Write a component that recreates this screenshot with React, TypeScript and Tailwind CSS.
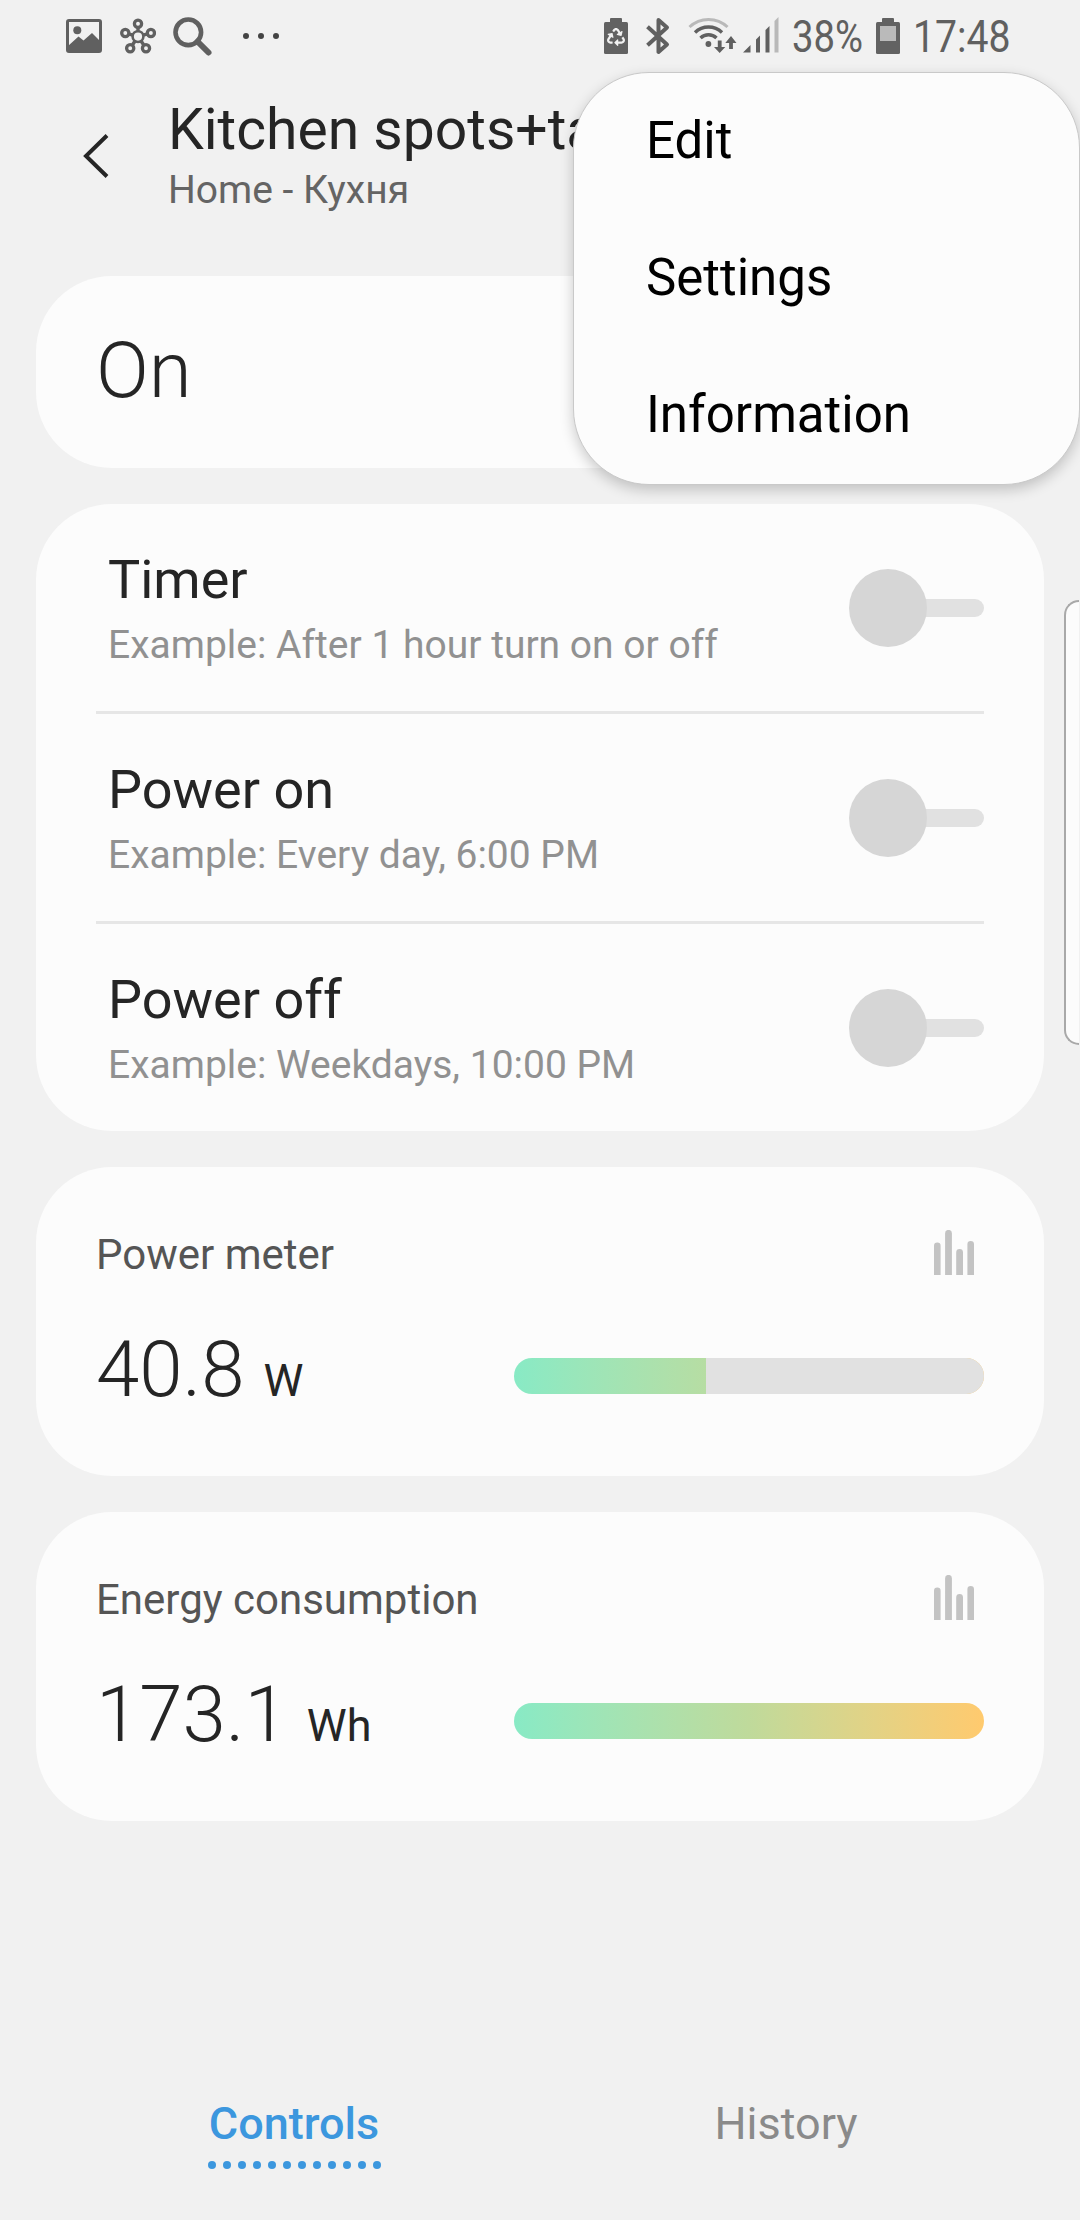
import React from "react";
import { FaRecycle } from "react-icons/fa";

const GREY = "#606060";

function PictureIcon() {
  return (
    <svg width="36" height="34" viewBox="0 0 36 34" className="shrink-0">
      <rect x="1.5" y="1.5" width="33" height="31" rx="1.5" fill="none" stroke={GREY} strokeWidth="3" />
      <circle cx="11.3" cy="11.2" r="4" fill={GREY} />
      <path d="M2 27 L12.500 17.500 L17.500 21.500 L26 14 L34 22 V33 H2 Z" fill={GREY} />
    </svg>
  );
}

function HubIcon() {
  const nodes = [
    [18, 5.8],
    [5.3, 15],
    [30.9, 15],
    [10.2, 30.3],
    [26, 30.3],
  ];
  return (
    <svg width="36" height="36" viewBox="0 0 36 36" className="shrink-0" fill="none" stroke={GREY}>
      {nodes.map(([x, y]) => (
        <g key={x}>
          <line x1={18 + (x - 18) * 0.38} y1={18.6 + (y - 18.6) * 0.38} x2={18 + (x - 18) * 0.7} y2={18.6 + (y - 18.6) * 0.7} strokeWidth="3.400" />
          <circle cx={x} cy={y} r="3.6" strokeWidth="3.300" />
        </g>
      ))}
      <circle cx="18" cy="18.6" r="5.4" strokeWidth="2.600" />
    </svg>
  );
}

function SearchIcon() {
  return (
    <svg width="40" height="40" viewBox="0 0 40 40" className="shrink-0" fill="none" stroke={GREY}>
      <circle cx="15.3" cy="15.3" r="12.800" strokeWidth="4.600" />
      <path d="M24.500 24.500 L35.500 35.500" strokeWidth="6" strokeLinecap="round" />
    </svg>
  );
}

function BluetoothIcon() {
  return (
    <svg width="24" height="38" viewBox="0 0 24 38" className="shrink-0" fill="none" stroke={GREY} strokeWidth="4">
      <path d="M1.500 9.800 L21 27.500 L12.500 35 V3 L21 10.500 L1.500 28.200" strokeLinejoin="round" />
    </svg>
  );
}

function WifiIcon() {
  return (
    <svg width="50" height="38" viewBox="0 0 50 38" className="shrink-0" fill="none" stroke={GREY} strokeWidth="3.400">
      <path d="M1.500 10 A27.500 27.500 0 0 1 39.500 10" stroke="#b9b9b9" strokeWidth="3" />
      <path d="M7 15.500 A19.500 19.500 0 0 1 34 15.500" />
      <path d="M12.500 21 A11.500 11.500 0 0 1 28.500 21" />
      <circle cx="20.400" cy="27" r="2.900" fill={GREY} stroke="none" />
      <path d="M31.700 23.500 V33 M43 22 V32" strokeWidth="3.800" />
      <path d="M26 30 H37.300 L31.700 36 Z M37.300 26 H48.500 L43 19 Z" fill={GREY} stroke="none" />
    </svg>
  );
}

function SignalIcon() {
  return (
    <svg width="36" height="36" viewBox="0 0 36 36" className="shrink-0" fill={GREY}>
      <path d="M0 35.500 L7.500 28 V35.500 Z M13 35.500 V22.500 L17 18.500 V35.500 Z M22.500 35.500 V13 L26.500 9 V35.500 Z" />
      <path d="M31.500 35.500 V4 L35.500 0 V35.500 Z" fill="#b9b9b9" />
    </svg>
  );
}

function BatteryBody({ children }: { children: React.ReactNode }) {
  return (
    <div className="flex shrink-0 flex-col items-center">
      <div className="h-[4px] w-[12px] rounded-t-[1px] bg-[#626262]" />
      <div className="flex h-[32px] w-[24px] flex-col items-center rounded-[1.5px] bg-[#626262]">{children}</div>
    </div>
  );
}

function StatusBar() {
  return (
    <div className="flex h-[73px] shrink-0 items-start">
      <div className="ml-[66px] mt-[19px]"><PictureIcon /></div>
      <div className="ml-[18px] mt-[18px]"><HubIcon /></div>
      <div className="ml-[17px] mt-[17px]"><SearchIcon /></div>
      <div className="ml-[30px] mt-[33px] flex gap-[9px]">
        <span className="size-[6px] rounded-full bg-[#444444]" />
        <span className="size-[6px] rounded-full bg-[#444444]" />
        <span className="size-[6px] rounded-full bg-[#444444]" />
      </div>
      <div className="ml-[325px] mt-[18px]">
        <BatteryBody>
          <FaRecycle className="mt-[6px] text-[#f1f1f1]" size={18} />
        </BatteryBody>
      </div>
      <div className="ml-[18px] mt-[17px]"><BluetoothIcon /></div>
      <div className="ml-[18px] mt-[17px]"><WifiIcon /></div>
      <div className="ml-[5px] mt-[17px]"><SignalIcon /></div>
      <div className="ml-[13px] mt-[11px] w-[84px] origin-left scale-x-[0.85] text-[45px] leading-[52px] whitespace-nowrap text-[#606060]">38%</div>
      <div className="mt-[18px]">
        <BatteryBody>
          <div className="mt-[4px] h-[15px] w-[16px] bg-[#bababa]" />
        </BatteryBody>
      </div>
      <div className="ml-[13px] mt-[11px] origin-left scale-x-[0.87] text-[45px] leading-[52px] whitespace-nowrap text-[#606060]">17:48</div>
    </div>
  );
}

function Header() {
  return (
    <header className="flex h-[203px] shrink-0 items-start">
      <svg width="26" height="44" viewBox="0 0 26 44" className="mt-[61px] ml-[83px] shrink-0" fill="none" stroke="#252525" strokeWidth="4">
        <path d="M24 1.500 L3 22 L24 42.500" />
      </svg>
      <div className="mt-[23px] ml-[59px] whitespace-nowrap">
        <h1 className="text-[57px] leading-[68px] text-[#252525]">Kitchen spots+ta</h1>
        <p className="mt-[3px] text-[39px] leading-[46px] text-[#646464]">Home - Кухня</p>
      </div>
    </header>
  );
}

function Card({ className, children }: { className: string; children: React.ReactNode }) {
  return <section className={"shrink-0 rounded-[76px] bg-[#fcfcfc] px-[60px] " + className}>{children}</section>;
}

function Toggle() {
  return (
    <div className="flex items-center">
      <div className="z-10 size-[78px] rounded-full bg-[#d6d6d6]" />
      <div className="-ml-[20px] h-[18px] w-[77px] rounded-full bg-[#e1e1e1]" />
    </div>
  );
}

function ScheduleRow({ title, hint }: { title: string; hint: string }) {
  return (
    <div className="flex h-[207px] items-center justify-between">
      <div className="pl-[12px]">
        <h2 className="text-[54px] leading-[64px] text-[#252525]">{title}</h2>
        <p className="mt-[10px] text-[39px] leading-[46px] text-[#919191]">{hint}</p>
      </div>
      <Toggle />
    </div>
  );
}

function MeterCard({ label, value, unit, percent }: { label: string; value: string; unit: string; percent: number }) {
  return (
    <Card className="h-[309px] pt-[63px]">
      <div className="flex h-[50px] items-start justify-between">
        <h3 className="text-[42px] leading-[50px] text-[#555555]">{label}</h3>
        <svg width="40" height="45" viewBox="0 0 40 45" className="mr-[10px]" fill="#c3c3c3">
          <path d="M0 45 V15.700 a3.300 3.300 0 0 1 6.600 0 V45 Z M11.100 45 V3.300 a3.300 3.300 0 0 1 6.800 0 V45 Z M22.200 45 V22.500 a3.300 3.300 0 0 1 6.800 0 V45 Z M33.400 45 V14.300 a3.300 3.300 0 0 1 6.600 0 V45 Z" />
        </svg>
      </div>
      <div className="mt-[45px] flex h-[90px] items-start justify-between">
        <p className="text-[78px] leading-[90px] font-light whitespace-pre text-[#252525]">
          {value + " "}
          <span className="text-[45px] leading-none font-normal">{unit}</span>
        </p>
        <div className="mt-[33px] flex h-[36px] w-[470px] justify-end overflow-hidden rounded-full bg-linear-to-r from-[#88eac5] via-[#bfda9b] to-[#ffca6e]">
          <div className="h-full bg-[#e1e1e1]" style={{ width: `${100 - percent}%` }} />
        </div>
      </div>
    </Card>
  );
}

function Tabs() {
  return (
    <nav className="mt-auto flex h-[136px] shrink-0 items-start px-[48px] text-[45px] leading-[54px]">
      <div className="flex w-[492px] flex-col items-center">
        <span className="mt-[13px] font-medium text-[#3c97de]">Controls</span>
        <div className="mt-[10px] flex gap-[7px]">
          {Array.from({ length: 12 }, (_, i) => (
            <span key={i} className="size-[8px] rounded-full bg-[#3c97de]" />
          ))}
        </div>
      </div>
      <div className="flex w-[492px] justify-center">
        <span className="mt-[13px] text-[#8a8a8a]">History</span>
      </div>
    </nav>
  );
}

function OverflowMenu() {
  return (
    <div className="absolute top-[72px] left-[573px] z-20 h-[413px] w-[507px] rounded-[76px] border border-[#c9c9c9] bg-[#fcfcfc] text-[51px] text-black shadow-[0_5px_14px_rgba(0,0,0,0.2)]">
      {["Edit", "Settings", "Information"].map((item) => (
        <div key={item} className="flex h-[137px] items-center pb-px pl-[72px]">{item}</div>
      ))}
    </div>
  );
}

export default function App() {
  return (
    <div className="relative flex h-[2220px] w-[1080px] flex-col overflow-hidden bg-[#f1f1f1] font-['Roboto',sans-serif]">
      <StatusBar />
      <Header />
      <main className="flex flex-col gap-[36px] px-[36px]">
        <Card className="flex h-[192px] items-center pb-[2px]">
          <span className="text-[78px] leading-[90px] font-light text-[#252525]">On</span>
        </Card>
        <Card className="h-[627px]">
          <ScheduleRow title="Timer" hint="Example: After 1 hour turn on or off" />
          <div className="h-[3px] bg-[#e6e6e6]" />
          <ScheduleRow title="Power on" hint="Example: Every day, 6:00 PM" />
          <div className="h-[3px] bg-[#e6e6e6]" />
          <ScheduleRow title="Power off" hint="Example: Weekdays, 10:00 PM" />
        </Card>
        <MeterCard label="Power meter" value="40.8" unit="W" percent={40.8} />
        <MeterCard label="Energy consumption" value="173.1" unit="Wh" percent={100} />
      </main>
      <Tabs />
      <OverflowMenu />
      <div className="absolute top-[600px] right-px h-[445px] w-[15px] rounded-l-[18px] border-2 border-r-0 border-[#a9a9a9] bg-[#fcfcfc]" />
    </div>
  );
}
